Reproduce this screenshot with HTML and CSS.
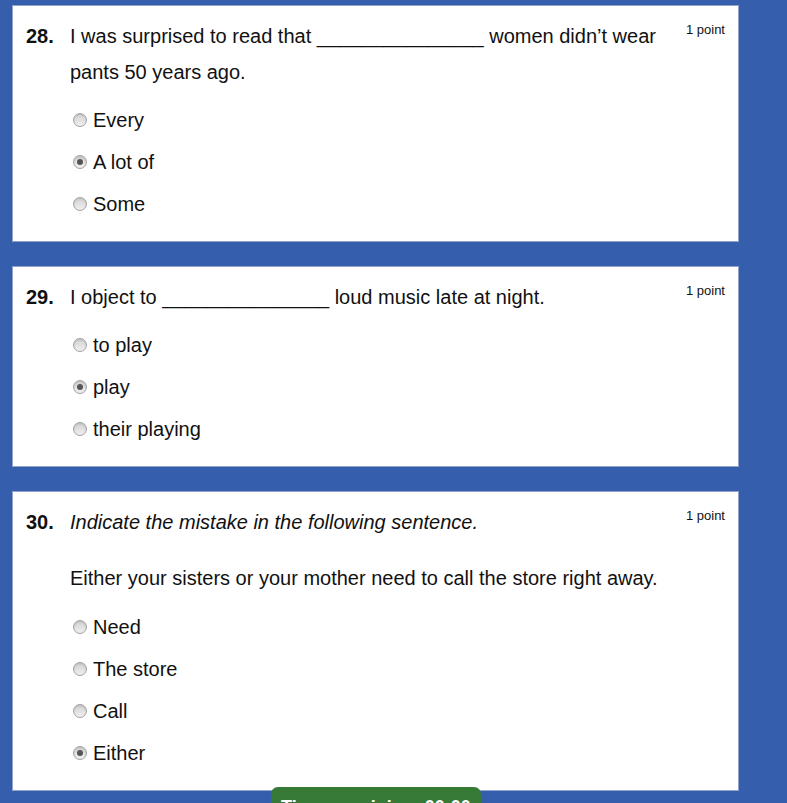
FILE: index.html
```html
<!DOCTYPE html>
<html lang="en">
<head>
<meta charset="utf-8">
<title>Quiz</title>
<link rel="stylesheet" href="styles.css">
</head>
<body>
<main class="quiz">
  <section class="card">
    <div class="q-row">
      <div class="q-num">28.</div>
      <div class="q-text">I was surprised to read that _______________ women didn’t wear pants 50 years ago.</div>
      <div class="q-points">1 point</div>
    </div>
    <ul class="options">
      <li class="option"><span class="radio"></span>Every</li>
      <li class="option"><span class="radio checked"></span>A lot of</li>
      <li class="option"><span class="radio"></span>Some</li>
    </ul>
  </section>

  <section class="card">
    <div class="q-row">
      <div class="q-num">29.</div>
      <div class="q-text">I object to _______________ loud music late at night.</div>
      <div class="q-points">1 point</div>
    </div>
    <ul class="options">
      <li class="option"><span class="radio"></span>to play</li>
      <li class="option"><span class="radio checked"></span>play</li>
      <li class="option"><span class="radio"></span>their playing</li>
    </ul>
  </section>

  <section class="card">
    <div class="q-row">
      <div class="q-num">30.</div>
      <div class="q-text"><em>Indicate the mistake in the following sentence.</em></div>
      <div class="q-points">1 point</div>
    </div>
    <p class="q-sentence">Either your sisters or your mother need to call the store right away.</p>
    <ul class="options">
      <li class="option"><span class="radio"></span>Need</li>
      <li class="option"><span class="radio"></span>The store</li>
      <li class="option"><span class="radio"></span>Call</li>
      <li class="option"><span class="radio checked"></span>Either</li>
    </ul>
  </section>
</main>
<div class="timer">Time remaining: 00:00</div>
</body>
</html>
```

FILE: styles.css
```css
html, body {
  margin: 0;
  padding: 0;
}
body {
  background: #355ead;
  font-family: "Liberation Sans", Arial, sans-serif;
  color: #111;
  height: 803px;
  overflow: hidden;
  position: relative;
}
.quiz {
  width: 727px;
  margin-left: 12px;
  padding-top: 5px;
  display: flex;
  flex-direction: column;
  gap: 24px;
}
.card {
  background: #fff;
  border: 1px solid #8fa3cc;
  padding: 12px 13px 16px 13px;
}
.q-row {
  display: flex;
  align-items: flex-start;
}
.q-num {
  width: 44px;
  flex: none;
  font-weight: bold;
  font-size: 20px;
  line-height: 36px;
}
.q-text {
  flex: 1;
  font-size: 20px;
  line-height: 36px;
  padding-right: 22px;
}
.q-points {
  flex: none;
  font-size: 13px;
  line-height: 16px;
  padding-top: 4px;
}
.q-sentence {
  margin: 20px 0 0 44px;
  font-size: 20px;
  line-height: 36px;
}
.options {
  list-style: none;
  margin: 9px 0 0 44px;
  padding: 0;
}
.q-sentence + .options {
  margin-top: 10px;
}
.option {
  display: flex;
  align-items: center;
  height: 42px;
  font-size: 20px;
}
.radio {
  width: 12px;
  height: 12px;
  margin: 0 6px 0 3px;
  border: 1px solid #a3a3a3;
  border-radius: 50%;
  background: linear-gradient(#d2d2d2, #f0f0f0);
  box-shadow: inset 0 1px 2px rgba(0,0,0,0.12);
  display: flex;
  align-items: center;
  justify-content: center;
  flex: none;
}
.radio.checked::after {
  content: "";
  width: 6px;
  height: 6px;
  border-radius: 50%;
  background: #555;
}
.timer {
  position: absolute;
  left: 271px;
  top: 787px;
  width: 210px;
  height: 40px;
  background: #377a35;
  border-radius: 7px 7px 0 0;
  color: #fff;
  font-weight: bold;
  font-size: 18px;
  line-height: 40px;
  box-sizing: border-box;
  padding-left: 10px;
  white-space: nowrap;
  overflow: hidden;
}
```
